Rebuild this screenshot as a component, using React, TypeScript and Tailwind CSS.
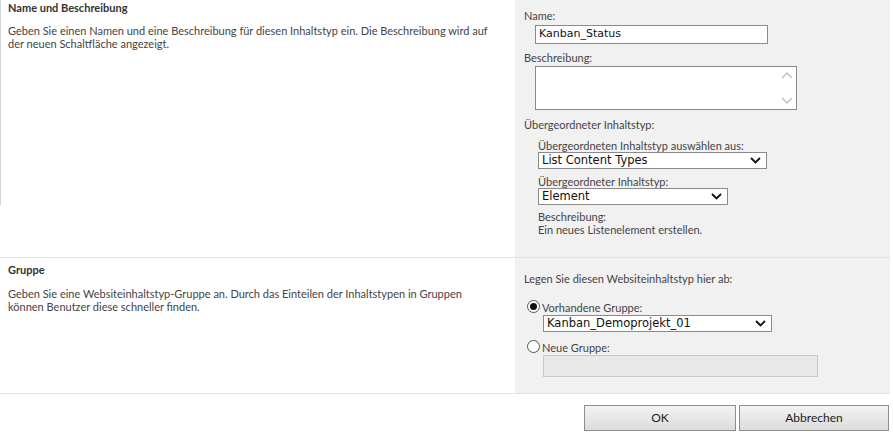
import type { ReactNode } from "react";

const UI = "font-['Lato','Open_Sans',sans-serif]";
const FIELD = "font-['DejaVu_Sans','Verdana',sans-serif]";

function Chevron() {
  return (
    <svg width="11" height="7" viewBox="0 0 11 7" className="shrink-0">
      <polyline points="1,1 5.5,5.5 10,1" fill="none" stroke="#111" strokeWidth="1.8" />
    </svg>
  );
}

function Select({ value, width }: { value: string; width: string }) {
  return (
    <div
      className={`${width} h-[17px] flex items-center justify-between border border-[#8a8a8a] bg-white pl-[3px] pr-[5px] ${FIELD} text-[11.5px] text-[#111]`}
    >
      <span>{value}</span>
      <Chevron />
    </div>
  );
}

function Radio({ checked }: { checked?: boolean }) {
  return (
    <span className="w-[13px] h-[13px] rounded-full border border-[#555] bg-white flex items-center justify-center shrink-0">
      {checked && <span className="w-[7px] h-[7px] rounded-full bg-[#111]" />}
    </span>
  );
}

function Label({ children, className = "" }: { children: ReactNode; className?: string }) {
  return <div className={`text-[11px] leading-[13px] text-[#444] ${className}`}>{children}</div>;
}

export default function App() {
  return (
    <div className={`w-[893px] h-[432px] bg-white ${UI} overflow-hidden`}>
      {/* Name und Beschreibung */}
      <div className="flex w-[890px] h-[258px] border-b border-[#e1e1e1]">
        <div className="w-[515px]">
          <div className="h-[205px] border-l border-[#d5d5d5] pl-[7px] pt-px">
            <div className="text-[11px] leading-[13px] font-bold text-[#333]">Name und Beschreibung</div>
            <div className="mt-[10px] text-[11px] leading-[13px] text-[#444] w-[490px]">
              Geben Sie einen Namen und eine Beschreibung für diesen Inhaltstyp ein. Die Beschreibung wird auf
              der neuen Schaltfläche angezeigt.
            </div>
          </div>
        </div>
        <div className="flex-1 bg-[#f1f1f2] pl-[9px] pt-[9px]">
          <Label>Name:</Label>
          <div
            className={`ml-[11px] mt-[3px] w-[233px] h-[19px] border border-[#8a8a8a] bg-white flex items-center px-[3px] ${FIELD} text-[11px] text-[#111]`}
          >
            Kanban_Status
          </div>
          <Label className="mt-[7px]">Beschreibung:</Label>
          <div className="ml-[11px] mt-[2px] w-[262px] h-[44px] border border-[#8a8a8a] bg-white flex justify-end pr-[3px]">
            <div className="flex flex-col justify-between py-[4px]">
              <svg width="12" height="8" viewBox="0 0 12 8">
                <polyline points="1,7 6,2 11,7" fill="none" stroke="#c4c4c4" strokeWidth="1.5" />
              </svg>
              <svg width="12" height="8" viewBox="0 0 12 8">
                <polyline points="1,1 6,6 11,1" fill="none" stroke="#c4c4c4" strokeWidth="1.5" />
              </svg>
            </div>
          </div>
          <Label className="mt-[8px]">Übergeordneter Inhaltstyp:</Label>
          <div className="ml-[14px] mt-[8px]">
            <Label className="leading-[12px]">Übergeordneten Inhaltstyp auswählen aus:</Label>
            <Select value="List Content Types" width="w-[229px]" />
            <Label className="mt-[6px] leading-[12px]">Übergeordneter Inhaltstyp:</Label>
            <Select value="Element" width="w-[190px]" />
            <Label className="mt-[5px]">Beschreibung:</Label>
            <Label>Ein neues Listenelement erstellen.</Label>
          </div>
        </div>
      </div>

      {/* Gruppe */}
      <div className="flex w-[890px] h-[136px] border-b border-[#e1e1e1]">
        <div className="w-[515px] pl-[8px] pt-[5px]">
          <div className="text-[11px] leading-[13px] font-bold text-[#333]">Gruppe</div>
          <div className="mt-[11px] text-[11px] leading-[13px] text-[#444] w-[490px]">
            Geben Sie eine Websiteinhaltstyp-Gruppe an. Durch das Einteilen der Inhaltstypen in Gruppen
            können Benutzer diese schneller finden.
          </div>
        </div>
        <div className="flex-1 bg-[#f1f1f2] pl-[9px] pt-[14px]">
          <Label>Legen Sie diesen Websiteinhaltstyp hier ab:</Label>
          <div className="mt-[13px] ml-[3px] flex items-center gap-[2px]">
            <Radio checked />
            <Label className="mt-[3px]">Vorhandene Gruppe:</Label>
          </div>
          <div className="ml-[19px] mt-px">
            <Select value="Kanban_Demoprojekt_01" width="w-[229px]" />
          </div>
          <div className="mt-[6px] ml-[3px] flex items-center gap-[2px]">
            <Radio />
            <Label className="mt-[3px]">Neue Gruppe:</Label>
          </div>
          <div className="ml-[19px] mt-px w-[275px] h-[22px] border border-[#c8c8c8] bg-[#e9e9e9]" />
        </div>
      </div>

      {/* Buttons */}
      <div className="flex justify-end gap-[3px] pr-[4px] pt-[11px]">
        <button className="w-[152px] h-[26px] border border-[#8d8d8d] bg-gradient-to-b from-[#f3f3f3] to-[#dcdcdc] text-[12px] text-[#222]">
          OK
        </button>
        <button className="w-[150px] h-[26px] border border-[#8d8d8d] bg-gradient-to-b from-[#f3f3f3] to-[#dcdcdc] text-[12px] text-[#222]">
          Abbrechen
        </button>
      </div>
    </div>
  );
}
